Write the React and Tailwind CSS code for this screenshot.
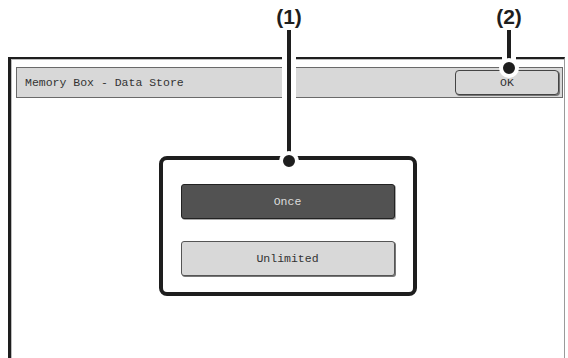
export default function App() {
  const mono = { fontFamily: '"Liberation Mono", "DejaVu Sans Mono", monospace' };
  return (
    <div className="relative w-[568px] h-[358px] overflow-hidden bg-white" style={{ fontFamily: '"Liberation Sans", Arial, sans-serif' }}>
      {/* window */}
      <div className="pt-[57px] pl-[8px] h-full">
        <div className="w-[557px] h-[310px] border-t-2 border-l-[3px] border-[#1e1e1e] border-r border-r-[#9a9a9a]">
          <div className="h-full border-t border-l border-[#bdbdbd] pt-[7px] pl-[4px] pr-[1px]">
            <div className="h-[31px] flex items-center justify-between bg-[#d8d8d8] border border-[#6a6a6a] pl-[8px] pr-[3px]" >
              <span className="text-[11.5px] text-[#333]" style={mono}>Memory Box - Data Store</span>
              <div className="w-[104px] h-[25px] flex items-center justify-center rounded-[4px] bg-[#d8d8d8] border border-[#444] shadow-[1px_1px_0_#777]">
                <span className="text-[11.5px] text-[#333]" style={mono}>OK</span>
              </div>
            </div>
            <div className="flex justify-center pt-[58px] pr-[4px]">
              <div className="w-[258px] h-[140px] border-[4px] border-[#1e1e1e] rounded-[8px] pt-[24px] px-[18px] flex flex-col gap-[22px]">
                <div className="h-[35px] flex items-center justify-center rounded-[3px] bg-[#525252] border border-[#222] shadow-[1px_1px_0_#aaa]">
                  <span className="text-[11.5px] text-[#dcdcdc]" style={mono}>Once</span>
                </div>
                <div className="h-[35px] flex items-center justify-center rounded-[3px] bg-[#d8d8d8] border border-[#555] shadow-[1px_1px_0_#777]">
                  <span className="text-[11.5px] text-[#333]" style={mono}>Unlimited</span>
                </div>
              </div>
            </div>
          </div>
        </div>
      </div>

      {/* callout (1) */}
      <div className="absolute left-[269px] top-[6px] w-[40px] text-center text-[21px] font-bold leading-none text-[#1e1e1e]">(1)</div>
      <div className="absolute left-[282px] top-[30px] w-[14px] h-[130px] border-x-[5px] border-white bg-[#1e1e1e] bg-clip-content" />
      <div className="absolute left-[279px] top-[151px] w-[20px] h-[20px] rounded-full bg-[#1e1e1e] border-[4px] border-white" />

      {/* callout (2) */}
      <div className="absolute left-[489px] top-[6px] w-[40px] text-center text-[21px] font-bold leading-none text-[#1e1e1e]">(2)</div>
      <div className="absolute left-[502px] top-[30px] w-[14px] h-[36px] border-x-[5px] border-white bg-[#1e1e1e] bg-clip-content" />
      <div className="absolute left-[499px] top-[58px] w-[20px] h-[20px] rounded-full bg-[#1e1e1e] border-[4px] border-white" />
    </div>
  );
}
